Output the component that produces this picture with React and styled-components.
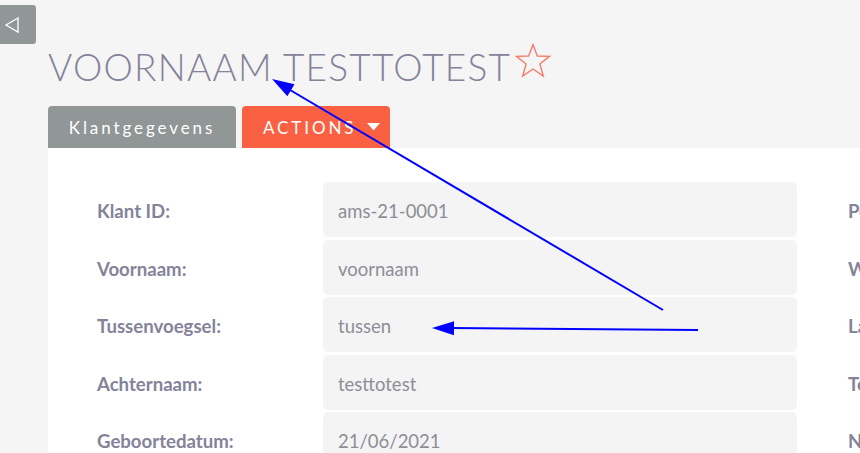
import React from "react";
import styled, { createGlobalStyle } from "styled-components";

const Global = createGlobalStyle`
  html, body { margin: 0; padding: 0; background: #f5f5f5; overflow: hidden; }
  body { font-family: Lato, "Open Sans", sans-serif; }
`;

const Page = styled.div`
  position: relative;
  width: 860px;
  height: 453px;
  overflow: hidden;
  background: #f5f5f5;
`;

const BackButton = styled.button`
  position: absolute;
  left: -4px;
  top: 5px;
  width: 40px;
  height: 39px;
  border: none;
  border-radius: 3px;
  background: #919697;
  color: #fff;
  padding: 0 0 0 8px;
  display: flex;
  align-items: center;
  cursor: pointer;
`;

const Main = styled.div`
  padding: 40px 0 0 48px;
`;

const TitleRow = styled.div`
  display: flex;
  align-items: flex-start;
  gap: 3px;
  height: 66px;
`;

const Title = styled.h1`
  margin: 0;
  font-family: Lato, sans-serif;
  font-weight: 300;
  font-size: 37px;
  letter-spacing: 1.25px;
  color: #84839a;
  line-height: 54px;
`;

const Tabs = styled.div`
  display: flex;
  gap: 6px;
`;

const Tab = styled.div`
  height: 42px;
  box-sizing: border-box;
  display: flex;
  align-items: center;
  justify-content: ${(p) => (p.$start ? "flex-start" : "center")};
  padding-left: ${(p) => (p.$start ? "21px" : "0")};
  gap: 11px;
  width: ${(p) => p.$w}px;
  border-radius: 4px 4px 0 0;
  background: ${(p) => p.$bg};
  color: #fff;
  font-size: 17px;
  letter-spacing: 2.9px;
  font-family: Lato, sans-serif;
`;

const Panel = styled.div`
  background: #fff;
  padding: 34px 0 0 49px;
  height: 400px;
`;

const Row = styled.div`
  display: grid;
  grid-template-columns: 226px 474px 51px auto;
  height: 55px;
  margin-bottom: 2.5px;
  align-items: center;
`;

const Label = styled.div`
  font-weight: 700;
  font-size: 18.6px;
  color: #84839a;
  white-space: nowrap;
  padding-top: 3px;
`;

const Value = styled.div`
  background: #f4f4f4;
  border-radius: 5px;
  height: 55px;
  box-sizing: border-box;
  display: flex;
  align-items: center;
  padding: 3px 0 0 15px;
  font-size: 18.5px;
  color: #8e8e96;
`;

const Overlay = styled.svg`
  position: absolute;
  left: 0;
  top: 0;
  pointer-events: none;
`;

const rows = [
  ["Klant ID:", "ams-21-0001", "Postcode:"],
  ["Voornaam:", "voornaam", "Woonplaats:"],
  ["Tussenvoegsel:", "tussen", "Land:"],
  ["Achternaam:", "testtotest", "Telefoon:"],
  ["Geboortedatum:", "21/06/2021", "Nationaliteit:"],
];

function arrowHead(x1, y1, x2, y2, len = 22, half = 7) {
  const dx = x2 - x1, dy = y2 - y1;
  const d = Math.hypot(dx, dy);
  const ux = dx / d, uy = dy / d;
  const bx = x2 - ux * len, by = y2 - uy * len;
  const px = -uy * half, py = ux * half;
  return `${x2},${y2} ${bx + px},${by + py} ${bx - px},${by - py}`;
}

export default function App() {
  return (
    <Page>
      <Global />
      <BackButton aria-label="back">
        <svg width="16" height="18" viewBox="0 0 16 18">
          <path d="M14 2 L2 9 L14 16 Z" fill="none" stroke="#fff" strokeWidth="1.3" strokeLinejoin="miter" />
        </svg>
      </BackButton>
      <Main>
        <TitleRow>
          <Title>VOORNAAM TESTTOTEST</Title>
          <svg width="38" height="36" viewBox="0 0 38 36" style={{ marginTop: 3 }}>
            <path
              d="M19 1.5 L23.3 13 L35.5 13.4 L25.9 21 L29.3 33 L19 26 L8.7 33 L12.1 21 L2.5 13.4 L14.7 13 Z"
              fill="none"
              stroke="#f47c6a"
              strokeWidth="1.4"
              strokeLinejoin="miter"
            />
          </svg>
        </TitleRow>
        <Tabs>
          <Tab $w={188} $bg="#919697">Klantgegevens</Tab>
          <Tab $w={148} $bg="#fa6042" $start>
            ACTIONS
            <svg width="13" height="8" viewBox="0 0 13 8">
              <path d="M0 0 L13 0 L6.5 7.5 Z" fill="#fff" />
            </svg>
          </Tab>
        </Tabs>
        <Panel>
          {rows.map(([l, v, r]) => (
            <Row key={l}>
              <Label>{l}</Label>
              <Value>{v}</Value>
              <span />
              <Label>{r}</Label>
            </Row>
          ))}
        </Panel>
      </Main>
      <Overlay width="860" height="453">
        <line x1="663" y1="310" x2="285" y2="87" stroke="#0000ff" strokeWidth="2" />
        <polygon points={arrowHead(663, 310, 272, 79)} fill="#0000ff" />
        <line x1="698" y1="330" x2="450" y2="328" stroke="#0000ff" strokeWidth="2" />
        <polygon points={arrowHead(698, 330, 432, 328)} fill="#0000ff" />
      </Overlay>
    </Page>
  );
}
